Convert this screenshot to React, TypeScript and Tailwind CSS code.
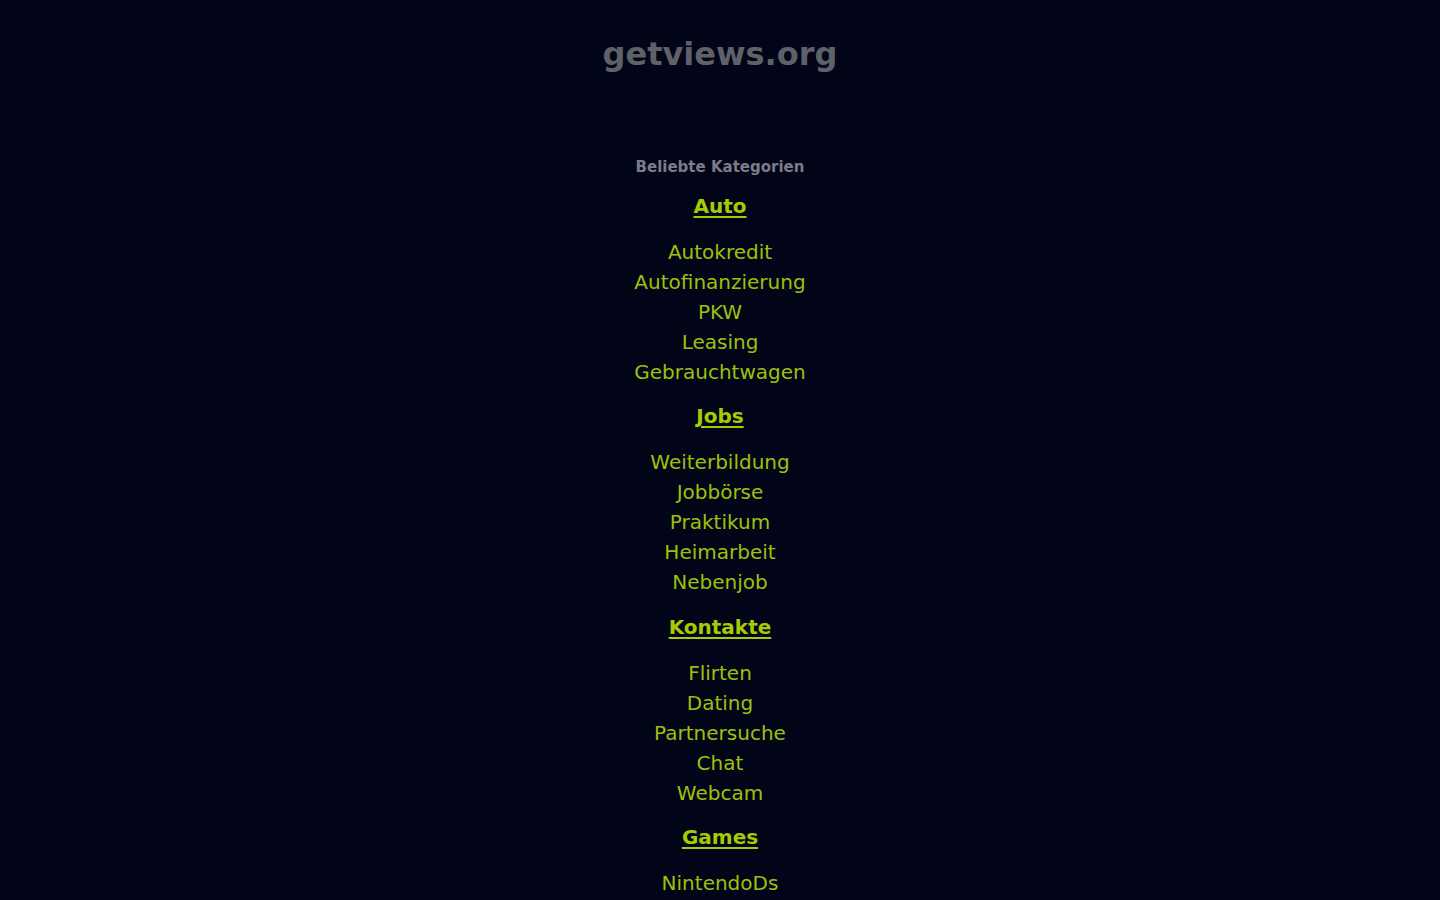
import React from 'react';

type Category = { name: string; links: string[] };

const categories: Category[] = [
  { name: 'Auto', links: ['Autokredit', 'Autofinanzierung', 'PKW', 'Leasing', 'Gebrauchtwagen'] },
  { name: 'Jobs', links: ['Weiterbildung', 'Jobbörse', 'Praktikum', 'Heimarbeit', 'Nebenjob'] },
  { name: 'Kontakte', links: ['Flirten', 'Dating', 'Partnersuche', 'Chat', 'Webcam'] },
  { name: 'Games', links: ['NintendoDs', 'Xbox', 'Playstation', 'Onlinespiele', 'Rollenspiele'] },
];

export default function App() {
  return (
    <div
      className="min-h-screen bg-[#020518] text-center"
      style={{ fontFamily: '"DejaVu Sans", Verdana, sans-serif' }}
    >
      <header className="pt-[34px]">
        <h1 className="text-[32px] leading-[40px] font-bold text-[#5f6168]">getviews.org</h1>
      </header>

      <main className="pt-[83px] pb-10">
        <h2 className="text-[15px] leading-[20px] font-bold text-[#7b7d86]">Beliebte Kategorien</h2>
        <div className="mt-[14px] flex flex-col items-center">
          {categories.map((cat, i) => (
            <section key={cat.name} className={i > 0 ? 'mt-[14.33px]' : ''}>
              <a
                href="#"
                className="block text-[20px] leading-[30px] font-bold text-[#a4cb05] underline underline-offset-[3px]"
              >
                {cat.name}
              </a>
              <ul className="mt-4">
                {cat.links.map(link => (
                  <li key={link}>
                    <a href="#" className="block text-[20px] leading-[30px] text-[#9dc00c]">
                      {link}
                    </a>
                  </li>
                ))}
              </ul>
            </section>
          ))}
        </div>
      </main>
    </div>
  );
}
